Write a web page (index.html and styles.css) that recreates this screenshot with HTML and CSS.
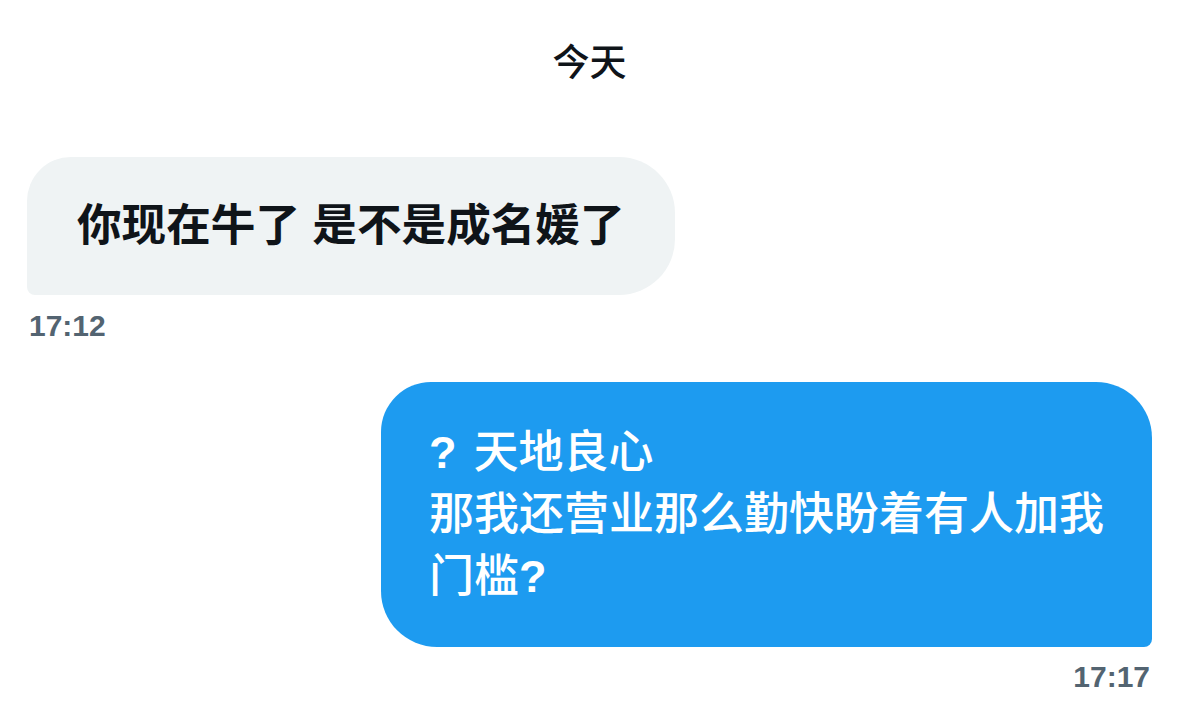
FILE: index.html
```html
<!DOCTYPE html>
<html lang="zh">
<head>
    <meta charset="utf-8"/>
    <meta name="viewport" content="width=device-width, initial-scale=1"/>
    <title>消息</title>
    <link rel="stylesheet" href="styles.css">
</head>
<body>

<div class="conversation">
    <div class="day_divider">今天</div>

    <!-- received -->
    <div class="message message--in">
        <div class="message__bubble">你现在牛了 是不是成名媛了</div>
        <div class="message__time">17:12</div>
    </div>

    <!-- sent -->
    <div class="message message--out">
        <div class="message__bubble"><span class="message__mark message__mark--lead">?</span>天地良心<br>那我还营业那么勤快盼着有人加我<br>门槛<span class="message__mark">?</span></div>
        <div class="message__time">17:17</div>
    </div>
</div>

</body>
</html>
```

FILE: styles.css
```css
html {
    height: 100%;
}

body {
    margin: 0;
    height: 100%;
    background-color: #ffffff;
    color: #0f1419;
    font-family: "Liberation Sans", "Noto Sans CJK SC", sans-serif;
}

.conversation {
    display: flex;
    flex-direction: column;
    padding: 44px 27px 0 27px;
}

.day_divider {
    text-align: center;
    font-size: 37px;
    line-height: 40px;
    font-weight: 500;
    margin-bottom: 73px;
}

.message {
    display: flex;
    flex-direction: column;
}

.message--in {
    align-items: flex-start;
    margin-bottom: 41px;
}

.message--out {
    align-items: flex-end;
}

.message__bubble {
    font-size: 45px;
    line-height: 62px;
    padding: 38px 50px;
}

.message--in .message__bubble {
    background-color: #eff3f4;
    font-size: 44.6px;
    font-weight: bold;
    border-radius: 44px 56px 56px 8px;
    padding-right: 50px;
}

.message--out .message__bubble {
    background-color: #1d9bf0;
    color: #ffffff;
    font-weight: 500;
    border-radius: 50px 56px 8px 56px;
    padding: 40px 48px 39px 48px;
}

.message__mark {
    font-weight: bold;
}

.message__mark--lead {
    margin-right: 17px;
}

.message__time {
    font-size: 30px;
    line-height: 30px;
    font-weight: bold;
    color: #536471;
    margin-top: 16px;
}

.message--in .message__time {
    padding-left: 2px;
}

.message--out .message__time {
    margin-top: 15px;
    padding-right: 2px;
}
```
